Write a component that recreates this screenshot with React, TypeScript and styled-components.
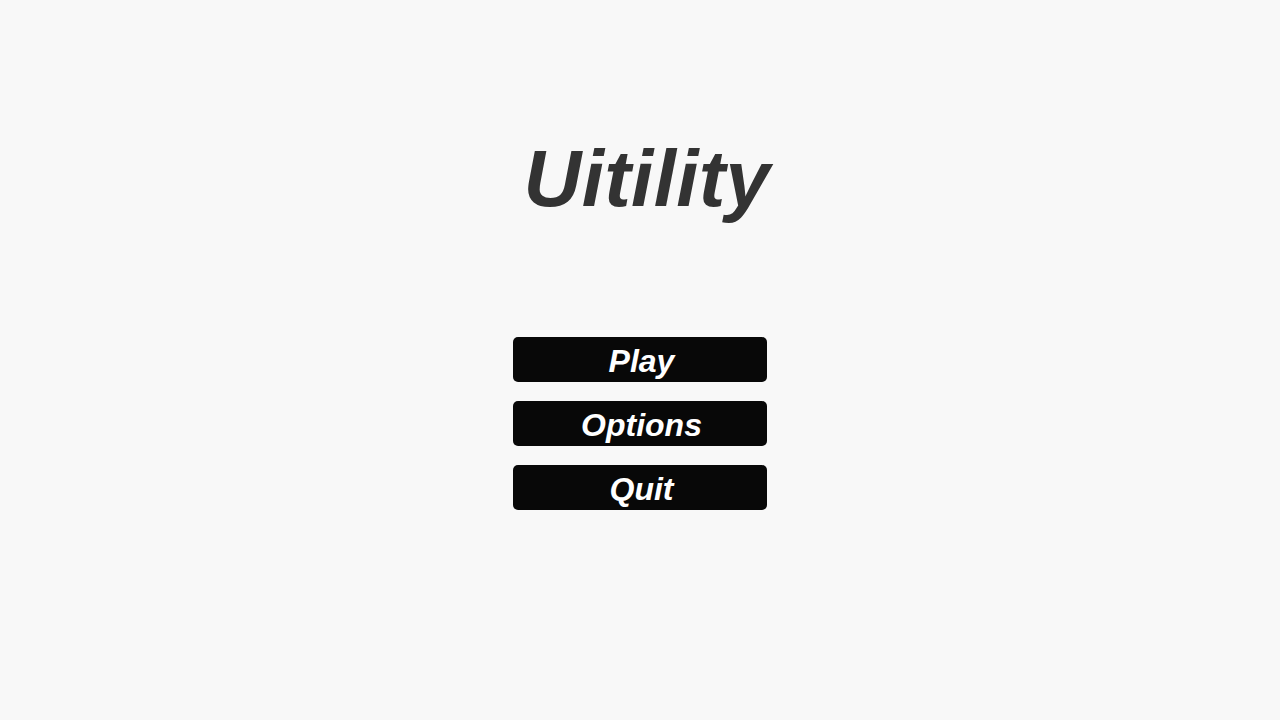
import React from 'react'
import styled, { createGlobalStyle } from 'styled-components'

const GlobalStyle = createGlobalStyle`
  html, body {
    margin: 0;
    padding: 0;
    background: #f8f8f8;
  }
`

const Screen = styled.div`
  width: 1280px;
  height: 720px;
  display: flex;
  flex-direction: column;
  align-items: center;
  font-family: 'Liberation Sans', Arial, sans-serif;
`

const Title = styled.h1`
  margin: 139px 0 0 14px;
  font-size: 80px;
  font-weight: 700;
  font-style: italic;
  line-height: 80px;
  letter-spacing: 0.3px;
  color: #333333;
`

const Menu = styled.div`
  display: flex;
  flex-direction: column;
  gap: 19px;
  margin-top: 118px;
`

const MenuButton = styled.button`
  width: 254px;
  height: 45px;
  border: none;
  border-radius: 5px;
  background: #080808;
  color: #ffffff;
  font-family: 'Liberation Sans', Arial, sans-serif;
  font-size: 32px;
  font-weight: 700;
  font-style: italic;
  line-height: 1;
  padding: 2px 0 0 3px;
  cursor: pointer;
`

const items = ['Play', 'Options', 'Quit']

export default function App() {
  return (
    <>
      <GlobalStyle />
      <Screen>
        <Title>Uitility</Title>
        <Menu>
          {items.map((item) => (
            <MenuButton key={item}>{item}</MenuButton>
          ))}
        </Menu>
      </Screen>
    </>
  )
}
